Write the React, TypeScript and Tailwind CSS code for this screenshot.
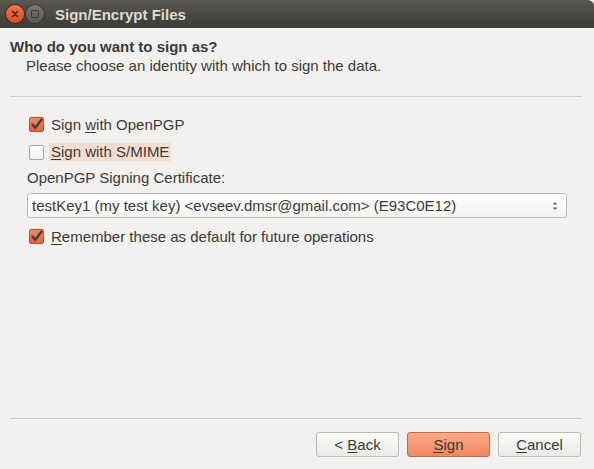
import React from 'react'

const CheckBox: React.FC<{ checked?: boolean }> = ({ checked }) => (
  checked ? (
    <span className="flex h-[15px] w-[15px] shrink-0 items-center justify-center rounded-[2px] border border-[#b9502c] bg-gradient-to-b from-[#f28a60] to-[#e0653b]">
      <svg width="13" height="13" viewBox="0 0 13 13">
        <path d="M2.5 6.5 L5.3 9.8 L11.5 1.5" fill="none" stroke="#3c3b37" strokeWidth="2.2" strokeLinecap="round" strokeLinejoin="round" />
      </svg>
    </span>
  ) : (
    <span className="h-[15px] w-[15px] shrink-0 rounded-[2px] border border-[#a8a6a1] bg-gradient-to-b from-[#ffffff] to-[#f0efed]" />
  )
)

const Button: React.FC<{ children: React.ReactNode; primary?: boolean }> = ({ children, primary }) => (
  <button
    className={
      primary
        ? 'flex h-[25px] w-[83px] items-center justify-center rounded-[3px] border border-[#c3684a] bg-gradient-to-b from-[#fbaa88] to-[#f0875f] text-[#3c3b37]'
        : 'flex h-[25px] w-[83px] items-center justify-center rounded-[3px] border border-[#bdbbb7] bg-gradient-to-b from-[#fbfbfa] to-[#ebeae8] text-[#3c3b37]'
    }
  >
    <span>{children}</span>
  </button>
)

const App: React.FC = () => {
  return (
    <div className="flex h-[469px] w-[594px] flex-col overflow-hidden bg-[#f2f1f0] text-[15px] leading-[19px] text-[#3c3b37] [font-family:'Liberation_Sans',sans-serif]">
      <div className="flex h-[28px] shrink-0 items-center rounded-tr-[6px] bg-gradient-to-b from-[#5b5852] to-[#3c3b37] pl-[6px]">
        <span className="flex h-[18px] w-[18px] items-center justify-center rounded-full bg-gradient-to-b from-[#f4754a] to-[#df4a18] shadow-[0_0_0_1px_#3a2a22]">
          <svg width="8" height="8" viewBox="0 0 8 8">
            <path d="M1.5 1.5 L6.5 6.5 M6.5 1.5 L1.5 6.5" stroke="#3c2a20" strokeWidth="1.6" strokeLinecap="round" />
          </svg>
        </span>
        <span className="ml-[2px] flex h-[18px] w-[18px] items-center justify-center rounded-full bg-gradient-to-b from-[#7a7772] to-[#5a5853] shadow-[0_0_0_1px_#35342f]">
          <span className="h-[8px] w-[8px] rounded-[2px] border-[1.5px] border-[#3a3935]" />
        </span>
        <span className="ml-[11px] font-bold text-[#dfdbd2]">Sign/Encrypt Files</span>
      </div>

      <div className="flex flex-1 flex-col px-[10px]">
        <div className="mt-[9px] font-bold">Who do you want to sign as?</div>
        <div className="ml-[16px]">Please choose an identity with which to sign the data.</div>
        <div className="mt-[21px] h-px w-[572px] bg-[#cdcbc8]" />

        <div className="mt-[17px] flex flex-col pl-[19px]">
          <div className="flex h-[20px] items-center gap-[7px]">
            <CheckBox checked />
            <span>Sign <u className="underline-offset-2">w</u>ith OpenPGP</span>
          </div>
          <div className="mt-[8px] flex h-[20px] items-center gap-[5px]">
            <CheckBox />
            <span className="bg-[#f5ddd0] px-[2px] leading-[18px]"><u className="underline-offset-2">S</u>ign with S/MIME</span>
          </div>
          <div className="ml-[-2px] mt-[6px]">OpenPGP Signing Certificate:</div>
        </div>

        <div className="ml-[17px] mt-[6px] flex h-[25px] w-[540px] items-center justify-between rounded-[3px] border border-[#bdbbb7] bg-gradient-to-b from-[#ffffff] to-[#f4f3f2] pl-[4px] pr-[8px]">
          <span>testKey1 (my test key) &lt;evseev.dmsr@gmail.com&gt; (E93C0E12)</span>
          <svg width="6" height="10" viewBox="0 0 6 10">
            <path d="M0.5 3.5 L3 1 L5.5 3.5 Z M0.5 6.5 L3 9 L5.5 6.5 Z" fill="#6b6a66" />
          </svg>
        </div>

        <div className="ml-[19px] mt-[8px] flex h-[20px] items-center gap-[7px]">
          <CheckBox checked />
          <span><u className="underline-offset-2">R</u>emember these as default for future operations</span>
        </div>

        <div className="flex-1" />
        <div className="h-px w-[572px] bg-[#cdcbc8]" />
        <div className="mb-[12px] mt-[13px] flex justify-end gap-[8px] pr-[3px]">
          <Button>{'< '}<u className="underline-offset-2">B</u>ack</Button>
          <Button primary><u className="underline-offset-2">S</u>ign</Button>
          <Button><u className="underline-offset-2">C</u>ancel</Button>
        </div>
      </div>
    </div>
  )
}

export default App
